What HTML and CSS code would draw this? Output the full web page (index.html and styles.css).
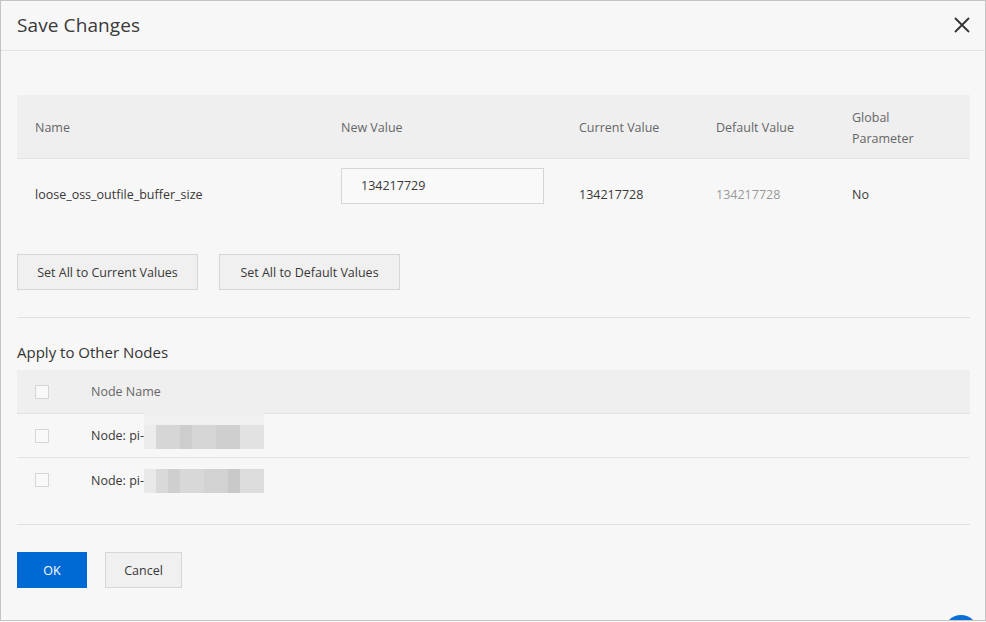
FILE: index.html
```html
<!DOCTYPE html>
<html>
<head>
<meta charset="utf-8">
<link rel="stylesheet" href="styles.css">
</head>
<body>
<div class="dialog">
  <div class="header">
    <div class="title">Save Changes</div>
    <svg class="close" width="18" height="18" viewBox="0 0 18 18"><path d="M2 2L16 16M16 2L2 16" stroke="#333" stroke-width="1.8" fill="none"/></svg>
  </div>
  <div class="body">
    <table class="params">
      <thead>
        <tr>
          <th class="c-name">Name</th>
          <th class="c-new">New Value</th>
          <th class="c-cur">Current Value</th>
          <th class="c-def">Default Value</th>
          <th class="c-glob">Global<br>Parameter</th>
        </tr>
      </thead>
      <tbody>
        <tr>
          <td>loose_oss_outfile_buffer_size</td>
          <td><div class="input">134217729</div></td>
          <td>134217728</td>
          <td class="muted">134217728</td>
          <td>No</td>
        </tr>
      </tbody>
    </table>
    <div class="btnrow">
      <button class="btn">Set All to Current Values</button>
      <button class="btn">Set All to Default Values</button>
    </div>
    <div class="sep"></div>
    <div class="subtitle">Apply to Other Nodes</div>
    <div class="nodes">
      <div class="nrow nhead"><span class="cb"></span><span>Node Name</span></div>
      <div class="nrow"><span class="cb"></span><span>Node: pi-</span><span class="blur b1"></span></div>
      <div class="nrow last"><span class="cb"></span><span>Node: pi-</span><span class="blur b2"></span></div>
    </div>
    <div class="sep sep2"></div>
    <div class="footer">
      <button class="btn primary">OK</button>
      <button class="btn cancel">Cancel</button>
    </div>
  </div>
  <div class="fab"></div>
</div>
</body>
</html>
```
FILE: styles.css
```css
* { box-sizing: border-box; }
html, body { margin: 0; padding: 0; }
body {
  width: 986px; height: 622px; overflow: hidden;
  font-family: "Open Sans", "Noto Sans", sans-serif;
  color: #333; background: #f7f7f7;
}
.dialog {
  position: relative;
  width: 986px; height: 621px;
  border: 1px solid #c4c4c4;
  background: #f7f7f7;
  overflow: hidden;
}
.header {
  height: 50px;
  border-bottom: 1px solid #e3e3e3;
  display: flex; align-items: center; justify-content: space-between;
  padding: 0 14px 0 16px;
}
.title { font-size: 19px; color: #3a3a3a; padding-bottom: 2px; letter-spacing: 0.1px; }
.close { display: block; margin-top: -2px; }
.body { padding: 44px 15px 0 16px; }
.params { width: 953px; border-collapse: collapse; font-size: 12.5px; table-layout: fixed; }
.params th {
  background: #efefef; font-weight: normal; color: #666; text-align: left;
  height: 63px; padding: 3px 0 0 18px; line-height: 21px;
  border-bottom: 1px solid #e3e3e3;
}
.params td { height: 72px; padding: 0 0 0 18px; vertical-align: middle; color: #383838; }
.params td:nth-child(2), .params th:nth-child(2) { padding-left: 0; }
.c-name { width: 324px; }
.c-new { width: 220px; }
.c-cur { width: 137px; }
.c-def { width: 136px; }
.muted { color: #999 !important; }
.input {
  width: 203px; height: 36px; border: 1px solid #d6d6d6; background: #f9f9f9;
  padding: 0 0 0 19px; line-height: 33px; margin-top: -16px;
}
.btnrow { display: flex; gap: 21px; margin-top: 24px; }
.btn {
  font-family: inherit; font-size: 12.5px; color: #383838;
  height: 36px; border: 1px solid #d6d6d6; background: #f0f0f0;
  padding: 0 18px; cursor: pointer;
}
.btnrow .btn { width: 181px; padding: 0; }
.sep { height: 1px; background: #e0e0e0; width: 953px; margin-top: 27px; }
.subtitle { font-size: 15px; color: #333; margin-top: 24px; line-height: 20px; }
.nodes { margin-top: 8px; width: 953px; font-size: 12.5px; }
.nrow {
  height: 44px; display: flex; align-items: center;
  border-bottom: 1px solid #e3e3e3; position: relative; color: #383838;
}
.nrow.last { border-bottom: none; }
.nhead { background: #efefef; color: #666; height: 44px; }
.cb {
  width: 14px; height: 14px; border: 1px solid #d6d6d6; background: #f9f9f9;
  margin: 0 42px 0 18px; flex: none;
}
.blur { display: block; width: 120px; height: 24px; margin-top: 2px; }
.b1 {
  background:
    linear-gradient(90deg, #ececec 0 12px, #d6d6d6 12px 36px, #cdcdcd 36px 48px, #d6d6d6 48px 72px, #cfcfcf 72px 96px, #e2e2e2 96px 120px);
  box-shadow: 0 -12px 0 -0px #f0f0f0;
}
.b2 {
  background:
    linear-gradient(90deg, #e9e9e9 0 12px, #d9d9d9 12px 24px, #cfcfcf 24px 36px, #d8d8d8 36px 60px, #d2d2d2 60px 84px, #c8c8c8 84px 96px, #dcdcdc 96px 120px);
}
.sep2 { margin-top: 22px; }
.footer { display: flex; gap: 18px; margin-top: 27px; }
.primary { background: #006ad4; border-color: #006ad4; color: #fff; width: 70px; padding: 0; }
.cancel { width: 77px; padding: 0; }
.fab {
  position: absolute; left: 943px; top: 614px; width: 34px; height: 34px;
  border-radius: 50%; background: #0a6fd6;
}
```
